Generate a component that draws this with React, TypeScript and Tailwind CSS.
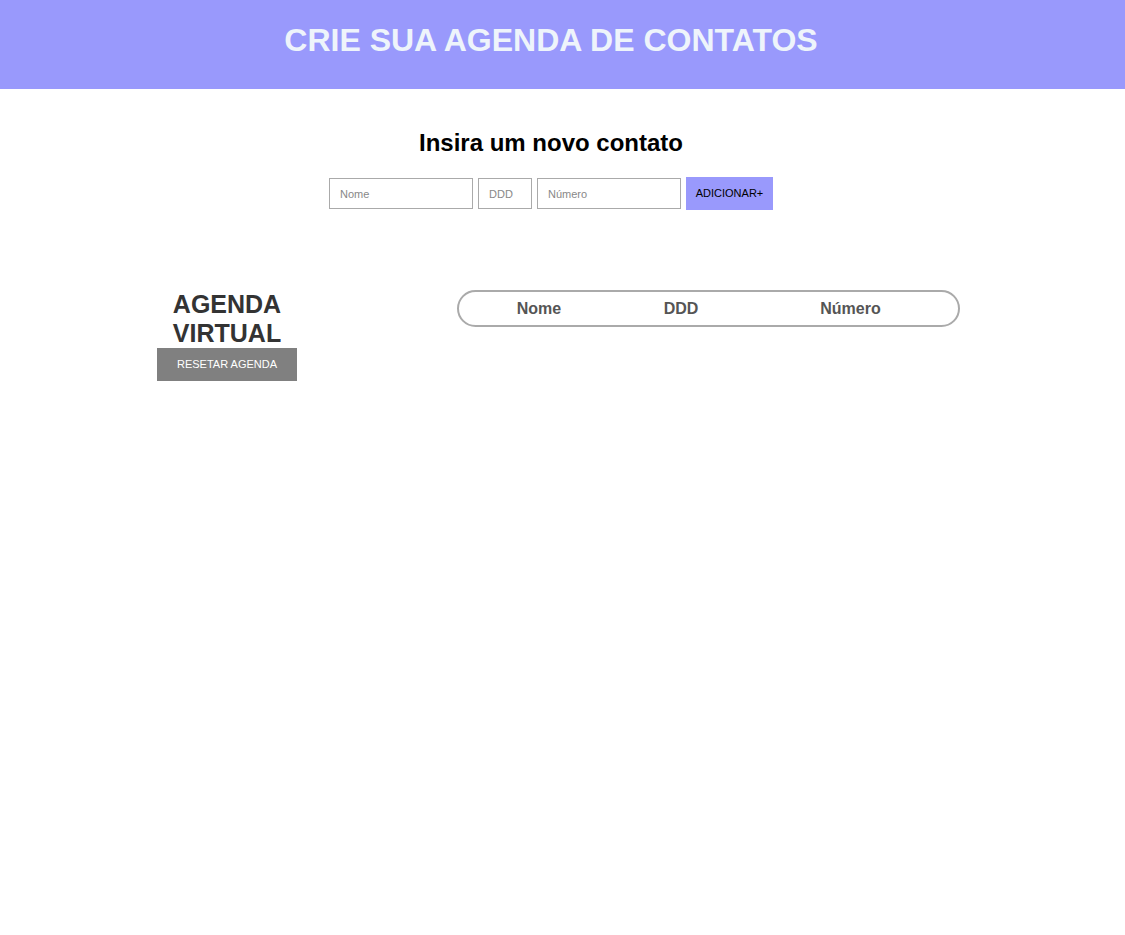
export default function App() {
  return (
    <div className="min-h-[935px] bg-white font-['Liberation_Sans',Arial,sans-serif]">
      <header className="h-[89px] bg-[#9999fc] flex items-center justify-center pr-[23px]">
        <h1 className="text-[32px] font-bold text-[#eef4fb] -mt-[9px]">CRIE SUA AGENDA DE CONTATOS</h1>
      </header>

      <section className="flex flex-col items-center pt-[39px] pr-[23px]">
        <h2 className="text-[24px] font-bold text-black leading-[30px]">Insira um novo contato</h2>
        <div className="flex items-center gap-[5px] mt-[19px]">
          <input
            placeholder="Nome"
            className="w-[144px] h-[31px] border border-[#aaa] px-[10px] text-[11px] placeholder:text-[#888] outline-none"
          />
          <input
            placeholder="DDD"
            className="w-[54px] h-[31px] border border-[#aaa] px-[10px] text-[11px] placeholder:text-[#888] outline-none"
          />
          <input
            placeholder="Número"
            className="w-[144px] h-[31px] border border-[#aaa] px-[10px] text-[11px] placeholder:text-[#888] outline-none"
          />
          <button className="w-[87px] h-[33px] bg-[#9999fc] text-[11px] text-black">ADICIONAR+</button>
        </div>
      </section>

      <section className="flex items-start mt-[80px]">
        <div className="w-[140px] ml-[157px] flex flex-col items-center">
          <h3 className="text-[25px] font-bold text-[#333] leading-[29px] text-center">
            AGENDA
            <br />
            VIRTUAL
          </h3>
          <button className="w-[140px] h-[33px] bg-[#808080] text-white text-[11px]">RESETAR AGENDA</button>
        </div>
        <div className="ml-[160px] w-[503px] h-[37px] border-2 border-[#aaa] rounded-full flex items-center text-[16px] font-bold text-[#555]">
          <span className="w-[160px] text-center">Nome</span>
          <span className="w-[124px] text-center">DDD</span>
          <span className="w-[215px] text-center">Número</span>
        </div>
      </section>
    </div>
  );
}
